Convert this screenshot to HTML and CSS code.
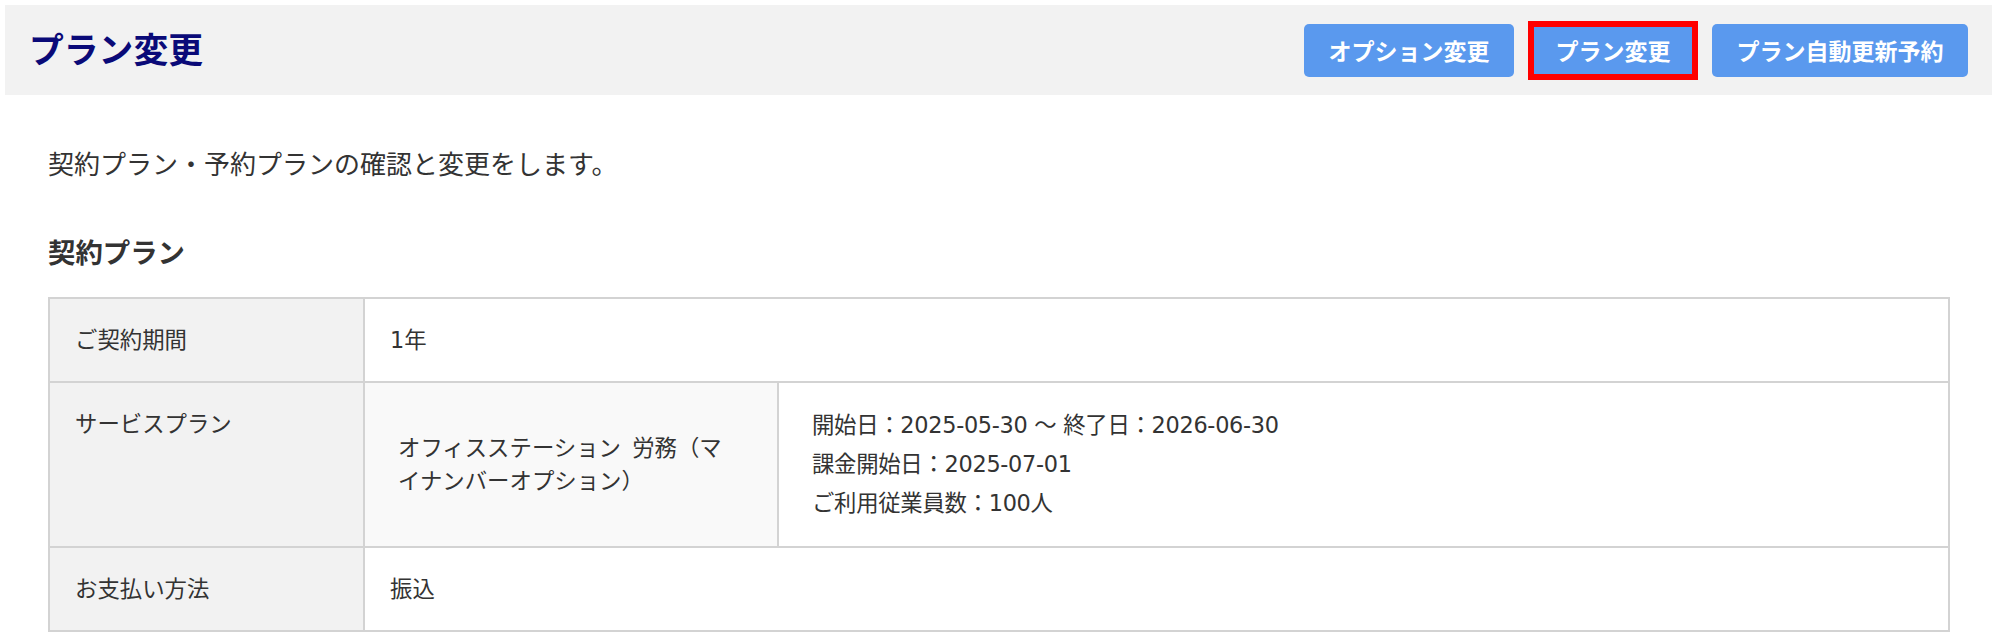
FILE: index.html
```html
<!DOCTYPE html>
<html lang="ja">
<head>
<meta charset="utf-8">
<title>プラン変更</title>
<link rel="stylesheet" href="styles.css">
</head>
<body>
<header class="page-header">
  <h1 class="page-title">プラン変更</h1>
  <div class="actions">
    <button class="btn" type="button">オプション変更</button>
    <button class="btn btn-current" type="button">プラン変更</button>
    <button class="btn" type="button">プラン自動更新予約</button>
  </div>
</header>
<main class="content">
  <p class="lead">契約プラン・予約プランの確認と変更をします。</p>
  <h2 class="section-title">契約プラン</h2>
  <table class="plan-table">
    <colgroup>
      <col class="col-label">
      <col class="col-sub">
      <col>
    </colgroup>
    <tr>
      <th>ご契約期間</th>
      <td colspan="2">1年</td>
    </tr>
    <tr>
      <th>サービスプラン</th>
      <td class="sub-name">オフィスステーション 労務（マイナンバーオプション）</td>
      <td class="sub-detail">
        <div>開始日：2025-05-30 〜 終了日：2026-06-30</div>
        <div>課金開始日：2025-07-01</div>
        <div>ご利用従業員数：100人</div>
      </td>
    </tr>
    <tr>
      <th>お支払い方法</th>
      <td colspan="2">振込</td>
    </tr>
  </table>
</main>
</body>
</html>
```

FILE: styles.css
```css
html, body {
  background: #ffffff;
}

body {
  margin: 5px 7px 0 5px;
  font-family: "DejaVu Sans", "Noto Sans CJK JP", sans-serif;
  color: #333333;
}

.page-header {
  display: flex;
  justify-content: space-between;
  align-items: center;
  height: 90px;
  padding: 0 24px;
  box-sizing: border-box;
  background: #f2f2f2;
}

.page-title {
  margin: -4px 0 0 0;
  font-family: "Noto Sans CJK JP", sans-serif;
  font-size: 34.8px;
  font-weight: 700;
  line-height: 1;
  color: #0a0a78;
}

.actions {
  display: flex;
  gap: 17px;
}

.btn {
  height: 53px;
  padding: 0 24.5px;
  border: none;
  border-radius: 5px;
  background: #5a99ee;
  color: #ffffff;
  font-family: "Noto Sans CJK JP", sans-serif;
  font-size: 23px;
  font-weight: 700;
  line-height: 1;
}

.btn-current {
  border-radius: 0;
  outline: 6px solid #ff0000;
  outline-offset: -3px;
}

.content {
  padding: 0 42px 0 43px;
}

.lead {
  margin: 50px 0 0 0;
  font-family: "Noto Sans CJK JP", sans-serif;
  font-size: 26px;
  line-height: 36px;
  color: #333333;
}

.section-title {
  margin: 51px 0 0 0;
  font-family: "Noto Sans CJK JP", sans-serif;
  font-size: 27.4px;
  font-weight: 700;
  line-height: 38px;
  color: #333333;
}

.plan-table {
  width: 100%;
  margin-top: 27px;
  border-collapse: collapse;
  border: 2px solid #d3d3d3;
  font-size: 22.4px;
  color: #333333;
}

.col-label {
  width: 315px;
}

.col-sub {
  width: 414px;
}

.plan-table th,
.plan-table td {
  border: 2px solid #d3d3d3;
  padding: 24px 25px;
  line-height: 34px;
  text-align: left;
  vertical-align: top;
}

.plan-table th {
  background: #f2f2f2;
  font-weight: 400;
}

.plan-table .sub-name {
  background: #f9f9f9;
  padding: 0 36px 0 33px;
  line-height: 33px;
  vertical-align: middle;
  word-spacing: 4px;
}

.plan-table .sub-detail {
  padding: 23px 33px;
  line-height: 39px;
  letter-spacing: -0.3px;
  vertical-align: middle;
}
```
